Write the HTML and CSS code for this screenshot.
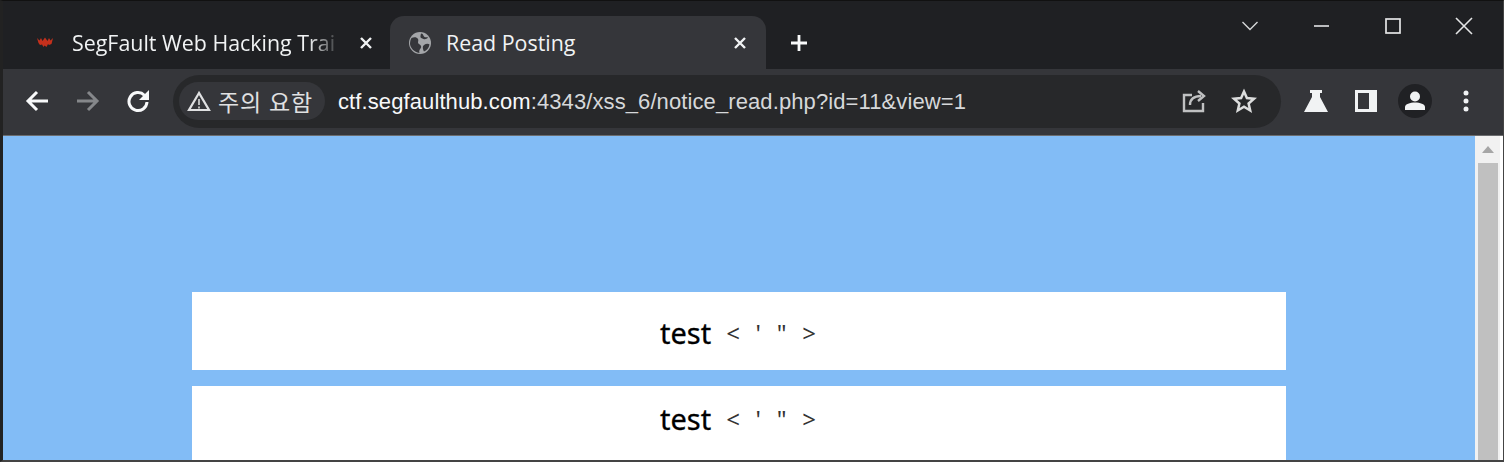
FILE: index.html
```html
<!DOCTYPE html>
<html lang="ko">
<head>
<meta charset="utf-8">
<title>Read Posting</title>
<link rel="stylesheet" href="styles.css">
</head>
<body>
<div class="window">
  <div class="tabstrip">
    <div class="tab">
      <svg class="favicon" width="16" height="16" viewBox="0 0 16 16"><path d="M0 3l2.500 2.500L4 3l1.500 3L8 2.500 10.500 6 12 3l1.500 2.500L16 3l-1.500 6-2.500 1-1-1-1.500 3-2-1.500L6.500 12 5 9.500 3 10 1.500 8z" fill="#c4301c"/></svg>
      <span class="tab-title fade">SegFault Web Hacking Trai</span>
      <svg class="tab-close" width="14" height="14" viewBox="0 0 14 14"><path d="M2 2l10 10M12 2L2 12" stroke="#f1f3f4" stroke-width="2.400"/></svg>
    </div>
    <div class="tab active">
      <svg class="favicon" width="22" height="22" viewBox="0 0 22 22"><circle cx="11" cy="11" r="11" fill="#a4a6a9"/><path d="M2.500 6C5 4.500 8 5 9 7s-1 3.500 1 5 3 2.500 1.500 4.500-1.500 3-1 4.500C5 20 1.500 16 1 12c0-2 .5-4.500 1.500-6zM12.500 1.500c2 .5 1.500 2.500 3 3.500s3-.5 3.500.5c-1 1.500-3 2-4.500 1.500s-3.500-1-3-3 0-2 1-2.500zM15 13c2-1.500 4.500-1.500 5.500-.5-.5 3.500-3 6-5.500 7-1-2-2-5 0-6.500z" fill="#35363a"/></svg>
      <span class="tab-title">Read Posting</span>
      <svg class="tab-close" width="14" height="14" viewBox="0 0 14 14"><path d="M2 2l10 10M12 2L2 12" stroke="#f1f3f4" stroke-width="2.400"/></svg>
    </div>
    <svg class="new-tab" width="20" height="20" viewBox="0 0 20 20"><path d="M10 2v16M2 10h16" stroke="#f8f9fa" stroke-width="2.800"/></svg>
    <div class="window-controls">
      <svg width="18" height="12" viewBox="0 0 18 12"><path d="M1.500 2l7.500 7.500L16.500 2" fill="none" stroke="#d5d6d8" stroke-width="1.400"/></svg>
      <svg class="win-min" width="18" height="4" viewBox="0 0 18 4"><path d="M1 2h15" stroke="#e4e5e6" stroke-width="1.600"/></svg>
      <svg class="win-max" width="16" height="16" viewBox="0 0 16 16"><rect x="1" y="1" width="14" height="14" fill="none" stroke="#e4e5e6" stroke-width="1.700"/></svg>
      <svg class="win-close" width="18" height="18" viewBox="0 0 18 18"><path d="M1 1l16 16M17 1L1 17" stroke="#e4e5e6" stroke-width="1.600"/></svg>
    </div>
  </div>
  <div class="toolbar">
    <div class="nav">
      <svg width="26" height="24" viewBox="0 0 26 24"><path d="M24 12H4M13 3l-9 9 9 9" fill="none" stroke="#f8f9fa" stroke-width="3"/></svg>
      <svg class="nav-fwd" width="26" height="24" viewBox="0 0 26 24"><path d="M2 12h20M13 3l9 9-9 9" fill="none" stroke="#85878a" stroke-width="3"/></svg>
      <svg class="nav-reload" width="24" height="24" viewBox="0 0 24 24"><path d="M21 13a9 9 0 1 1-2.600-6.800" fill="none" stroke="#f8f9fa" stroke-width="3"/><path d="M23 1v10H13z" fill="#f8f9fa"/></svg>
    </div>
    <div class="omnibox">
      <div class="chip">
        <svg width="24" height="22" viewBox="0 0 24 22"><path d="M12 3L2 20h20z" fill="none" stroke="#e0e1e2" stroke-width="2.200"/><path d="M12 9v6M12 16.500v2" stroke="#c9cacb" stroke-width="1.800"/></svg>
        <span class="chip-text">주의 요함</span>
      </div>
      <span class="url">ctf.segfaulthub.com<span class="url-dim">:4343/xss_6/notice_read.php?id=11&amp;view=1</span></span>
      <svg class="share" width="24" height="24" viewBox="0 0 24 24"><path d="M10 6H2v16h19v-8" fill="none" stroke="#c0c1c2" stroke-width="2.400"/><path d="M8 16c0-6 4-9 11-9" fill="none" stroke="#c0c1c2" stroke-width="2.400"/><path d="M16 2l6 5-6 5" fill="none" stroke="#c0c1c2" stroke-width="2.400"/></svg>
      <svg class="star" width="26" height="26" viewBox="0 0 26 26"><path d="M13 3.500l2.900 6.600 7.100.7-5.400 4.700 1.600 7L13 18.800l-6.200 3.700 1.600-7L3 10.800l7.100-.7z" fill="none" stroke="#dcdddd" stroke-width="2.500"/></svg>
    </div>
    <div class="actions">
      <svg width="24" height="24" viewBox="0 0 24 24"><path d="M6 1h12v3h-2v4l8 15H0L8 8V4H6z" fill="#f1f3f4"/></svg>
      <svg class="panel" width="22" height="22" viewBox="0 0 22 22"><rect width="22" height="22" fill="#f1f3f4"/><rect x="3" y="3" width="11" height="16" fill="#35363a"/></svg>
      <div class="avatar">
        <svg width="22" height="22" viewBox="0 0 22 22"><circle cx="11" cy="6.500" r="5" fill="#f1f3f4"/><path d="M1 20v-3c0-3 5-4.500 10-4.500s10 1.500 10 4.500v3z" fill="#f1f3f4"/></svg>
      </div>
      <svg class="menu" width="6" height="22" viewBox="0 0 6 22"><circle cx="3" cy="3" r="2.500" fill="#f1f3f4"/><circle cx="3" cy="11" r="2.500" fill="#f1f3f4"/><circle cx="3" cy="19" r="2.500" fill="#f1f3f4"/></svg>
    </div>
  </div>
  <div class="viewport">
    <main class="page">
      <div class="card card-first"><span class="post-title">test</span><span class="post-code">&lt; ' " &gt;</span></div>
      <div class="card card-second"><span class="post-title">test</span><span class="post-code">&lt; ' " &gt;</span></div>
    </main>
    <div class="scrollbar">
      <div class="scroll-btn"><svg width="12" height="7" viewBox="0 0 12 7"><path d="M6 0l6 7H0z" fill="#a6a6a6"/></svg></div>
      <div class="scroll-thumb"></div>
    </div>
  </div>
</div>
</body>
</html>
```

FILE: styles.css
```css
* { box-sizing: border-box; }
html, body { margin: 0; height: 100%; overflow: hidden; background: #fff; }
.window {
  width: 1504px; height: 462px; display: flex; flex-direction: column;
  border-style: solid; border-width: 1px 1px 2px 3px;
  border-color: #111 #444 #444 #222; overflow: hidden;
  font-family: "Liberation Sans", "Noto Sans CJK KR", sans-serif;
}
.tabstrip { height: 68px; flex: none; background: #1f2023; display: flex; align-items: flex-end; padding-left: 18px; position: relative; }
.tab { width: 369px; height: 53px; display: flex; align-items: center; padding: 0 17px 0 16px; color: #f1f3f4; }
.tab.active { width: 376px; background: #35363a; border-radius: 14px 14px 0 0; padding: 0 19px 0 19px; }
.favicon { flex: none; margin-right: 19px; }
.tab.active .favicon { margin-right: 15px; }
.tab-title { flex: 1; font-family: "Open Sans", "Liberation Sans", sans-serif; font-size: 21.400px; white-space: nowrap; overflow: hidden; }
.fade { -webkit-mask-image: linear-gradient(to right, #000 88%, transparent 100%); mask-image: linear-gradient(to right, #000 88%, transparent 100%); }
.tab-close { flex: none; margin-left: 18px; }
.new-tab { margin: 0 0 16px 23px; }
.window-controls { position: absolute; top: 0; right: 0; display: flex; align-items: center; height: 50px; }
.window-controls svg { flex: none; }
.win-min { margin-left: 54px; }
.win-max { margin-left: 54px; }
.win-close { margin: 0 30px 0 54px; }
.toolbar { height: 67px; flex: none; background: #35363a; display: flex; align-items: center; border-bottom: 1px solid #6b6c6e; padding-bottom: 2px; }
.nav { display: flex; align-items: center; padding-left: 21px; width: 170px; flex: none; }
.nav-fwd { margin-left: 25px; }
.nav-reload { margin-left: 25px; }
.omnibox { width: 1108px; height: 53px; flex: none; background: #27282a; border-radius: 27px; display: flex; align-items: center; padding-left: 6px; }
.chip { width: 146px; height: 38px; background: #35363a; border-radius: 19px; display: flex; align-items: center; padding-left: 8px; flex: none; }
.chip-text { font-size: 23px; color: #e0e1e2; margin-left: 7px; letter-spacing: 0.8px; white-space: nowrap; }
.url { flex: 1; margin-left: 13px; font-size: 22px; letter-spacing: 0.1px; color: #f8f9fa; white-space: nowrap; padding-top: 2px; }
.url-dim { color: #d6d8da; }
.share { flex: none; margin-right: 25px; }
.star { flex: none; margin-right: 24px; }
.actions { display: flex; align-items: center; padding-left: 23px; flex: 1; }
.panel { margin-left: 27px; }
.avatar { width: 34px; height: 34px; border-radius: 50%; background: #202124; display: flex; align-items: center; justify-content: center; margin-left: 21px; }
.menu { margin-left: 31px; }
.viewport { flex: 1; min-height: 0; display: flex; background: #fff; }
.page { flex: 1; background: #82bcf6; padding: 156px 189px 0 189px; min-width: 0; overflow: hidden; }
.card { height: 78px; flex: none; background: #fff; display: flex; align-items: center; justify-content: center; margin-bottom: 16px; color: #000; padding-right: 2px; }
.card-first { padding-top: 2px; }
.card-second { padding-bottom: 14px; }
.post-title { font-size: 29px; font-family: "Noto Sans", "Liberation Sans", sans-serif; -webkit-text-stroke: 0.300px #000; }
.post-code { font-size: 24px; margin-left: 15px; word-spacing: 9.500px; color: #333; font-family: "Noto Sans", "Liberation Sans", sans-serif; }
.scrollbar { width: 28px; flex: none; background: #f1f1f1; border-right: 3px solid #fff; display: flex; flex-direction: column; align-items: center; }
.scroll-btn { height: 27px; display: flex; align-items: center; justify-content: center; flex: none; }
.scroll-thumb { width: 20px; flex: 1; background: #c0c0c0; }
```
